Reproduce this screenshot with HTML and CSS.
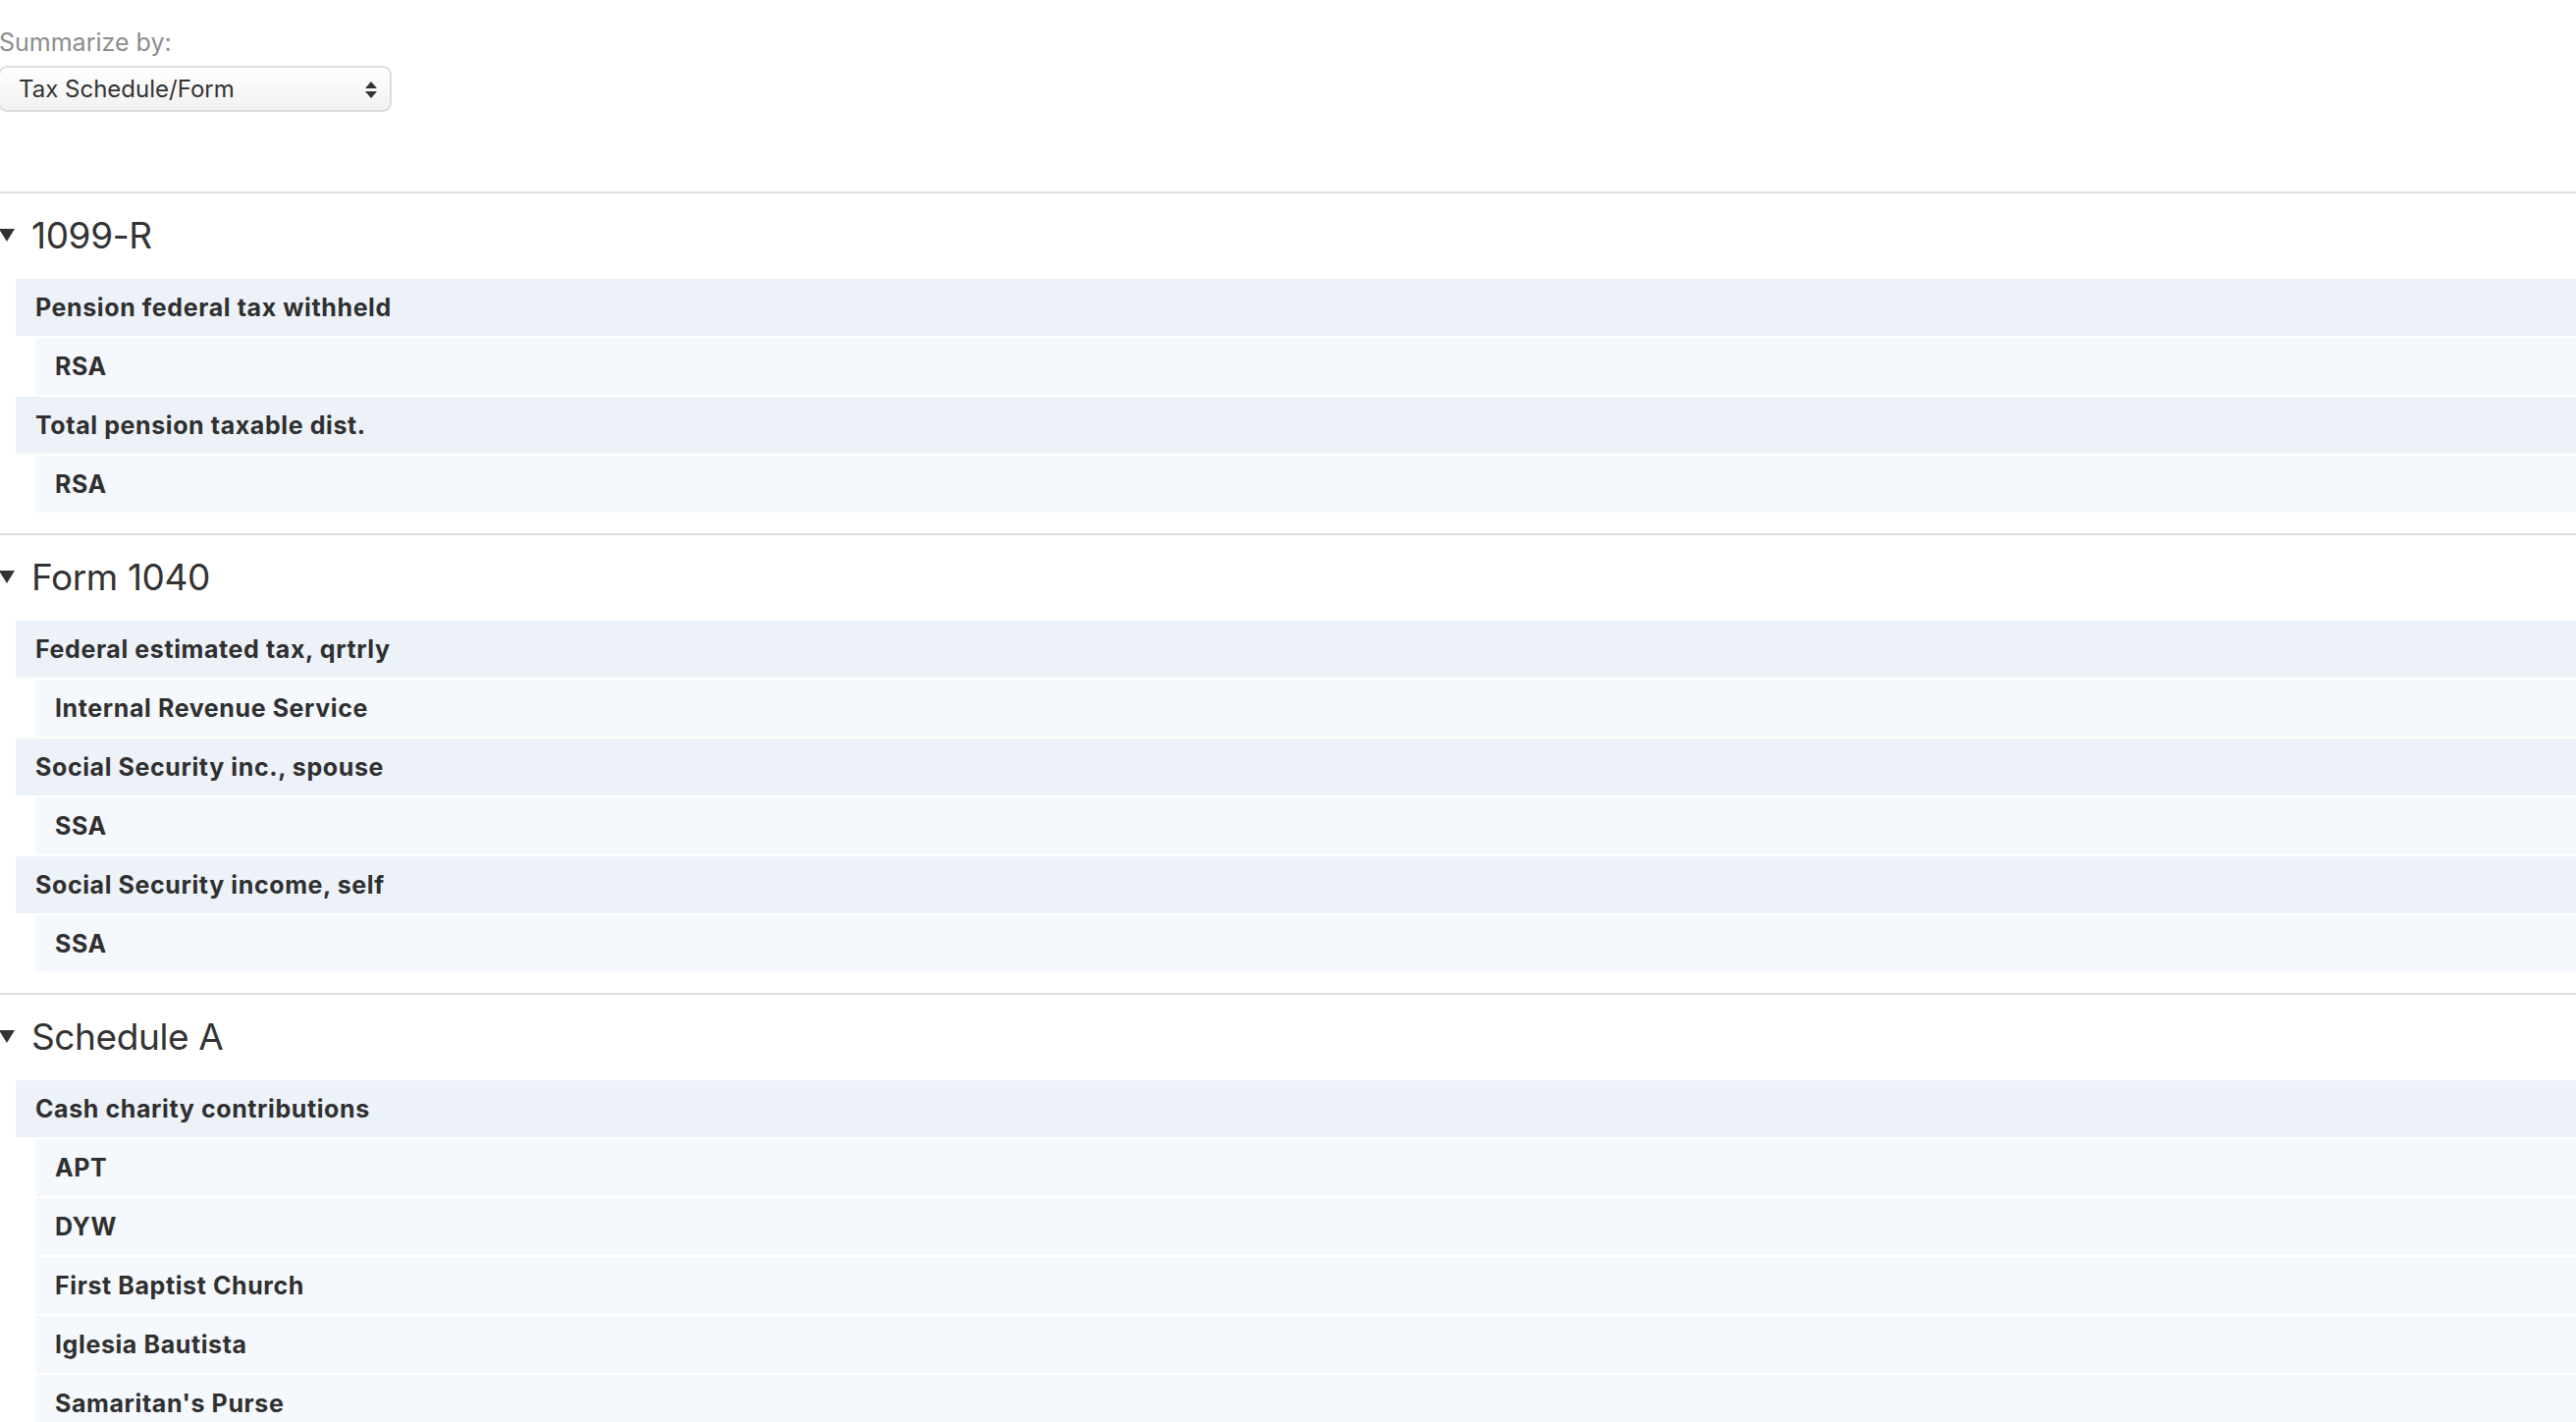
FILE: index.html
```html
<!DOCTYPE html>
<html lang="en">
<head>
    <meta charset="UTF-8">
    <meta name="viewport" content="width=device-width, initial-scale=1.0">
    <title>Tax Summary</title>
    <link rel="stylesheet" href="styles.css">
</head>
<body>
    <div class="page">
        <div class="toolbar">
            <label class="toolbar-label" for="summarize">Summarize by:</label>
            <div class="select-wrap">
                <select id="summarize" class="select">
                    <option>Tax Schedule/Form</option>
                    <option>Category</option>
                    <option>Payee</option>
                </select>
                <svg class="select-arrow" width="12" height="17" viewBox="0 0 12 17">
                    <polygon points="6,0 12,7 0,7"/>
                    <polygon points="0,10 12,10 6,17"/>
                </svg>
            </div>
        </div>

        <details class="group" open>
            <summary class="group-title">
                <svg class="caret" width="16" height="13" viewBox="0 0 16 13"><polygon points="0,0 16,0 8,13"/></svg>
                1099-R
            </summary>
            <div class="rows">
                <div class="row row-category">Pension federal tax withheld</div>
                <div class="row row-payee">RSA</div>
                <div class="row row-category">Total pension taxable dist.</div>
                <div class="row row-payee">RSA</div>
            </div>
        </details>

        <details class="group" open>
            <summary class="group-title">
                <svg class="caret" width="16" height="13" viewBox="0 0 16 13"><polygon points="0,0 16,0 8,13"/></svg>
                Form 1040
            </summary>
            <div class="rows">
                <div class="row row-category">Federal estimated tax, qrtrly</div>
                <div class="row row-payee">Internal Revenue Service</div>
                <div class="row row-category">Social Security inc., spouse</div>
                <div class="row row-payee">SSA</div>
                <div class="row row-category">Social Security income, self</div>
                <div class="row row-payee">SSA</div>
            </div>
        </details>

        <details class="group" open>
            <summary class="group-title">
                <svg class="caret" width="16" height="13" viewBox="0 0 16 13"><polygon points="0,0 16,0 8,13"/></svg>
                Schedule A
            </summary>
            <div class="rows">
                <div class="row row-category">Cash charity contributions</div>
                <div class="row row-payee">APT</div>
                <div class="row row-payee">DYW</div>
                <div class="row row-payee">First Baptist Church</div>
                <div class="row row-payee">Iglesia Bautista</div>
                <div class="row row-payee">Samaritan's Purse</div>
            </div>
        </details>
    </div>
</body>
</html>
```

FILE: styles.css
```css
body {
    font-family: Inter, 'Helvetica Neue', Arial, sans-serif;
    color: #333;
    background: #fff;
    margin: 0;
}
.page {
    margin-left: -2px;
    padding-top: 28px;
}
.toolbar {
    margin-bottom: 81px;
}
.toolbar-label {
    display: block;
    font-size: 25px;
    line-height: 30px;
    color: #8c8c8c;
    margin-left: 1px;
    margin-bottom: 9px;
}
.select-wrap {
    position: relative;
    width: 401px;
}
.select {
    appearance: none;
    -webkit-appearance: none;
    display: block;
    width: 100%;
    height: 47px;
    box-sizing: border-box;
    padding: 0 40px 0 19px;
    font-family: inherit;
    font-size: 24px;
    color: #333;
    border: 2px solid #dcdcdc;
    border-radius: 9px;
    background: linear-gradient(#ffffff, #f1f1f1);
    outline: none;
}
.select-arrow {
    position: absolute;
    right: 15px;
    top: 16px;
    fill: #333;
    pointer-events: none;
}

.group {
    border-top: 2px solid #dddddd;
    padding: 19px 0 21px;
}
.group-title {
    list-style: none;
    display: flex;
    align-items: center;
    gap: 17px;
    height: 46px;
    font-size: 37px;
    font-weight: 400;
    letter-spacing: -0.4px;
    color: #333;
    margin-bottom: 22px;
    cursor: pointer;
}
.group-title::-webkit-details-marker {
    display: none;
}
.caret {
    margin-left: 1px;
    fill: #333;
    flex-shrink: 0;
}
.rows {
    display: flex;
    flex-direction: column;
    gap: 2px;
    margin-left: 18px;
}
.row {
    height: 58px;
    line-height: 58px;
    padding-left: 20px;
    font-size: 25px;
    font-weight: 700;
    letter-spacing: 0.6px;
    color: #303030;
}
.row-category {
    background: #edf2f9;
}
.row-payee {
    background: #f5f8fc;
    margin-left: 20px;
}
```
